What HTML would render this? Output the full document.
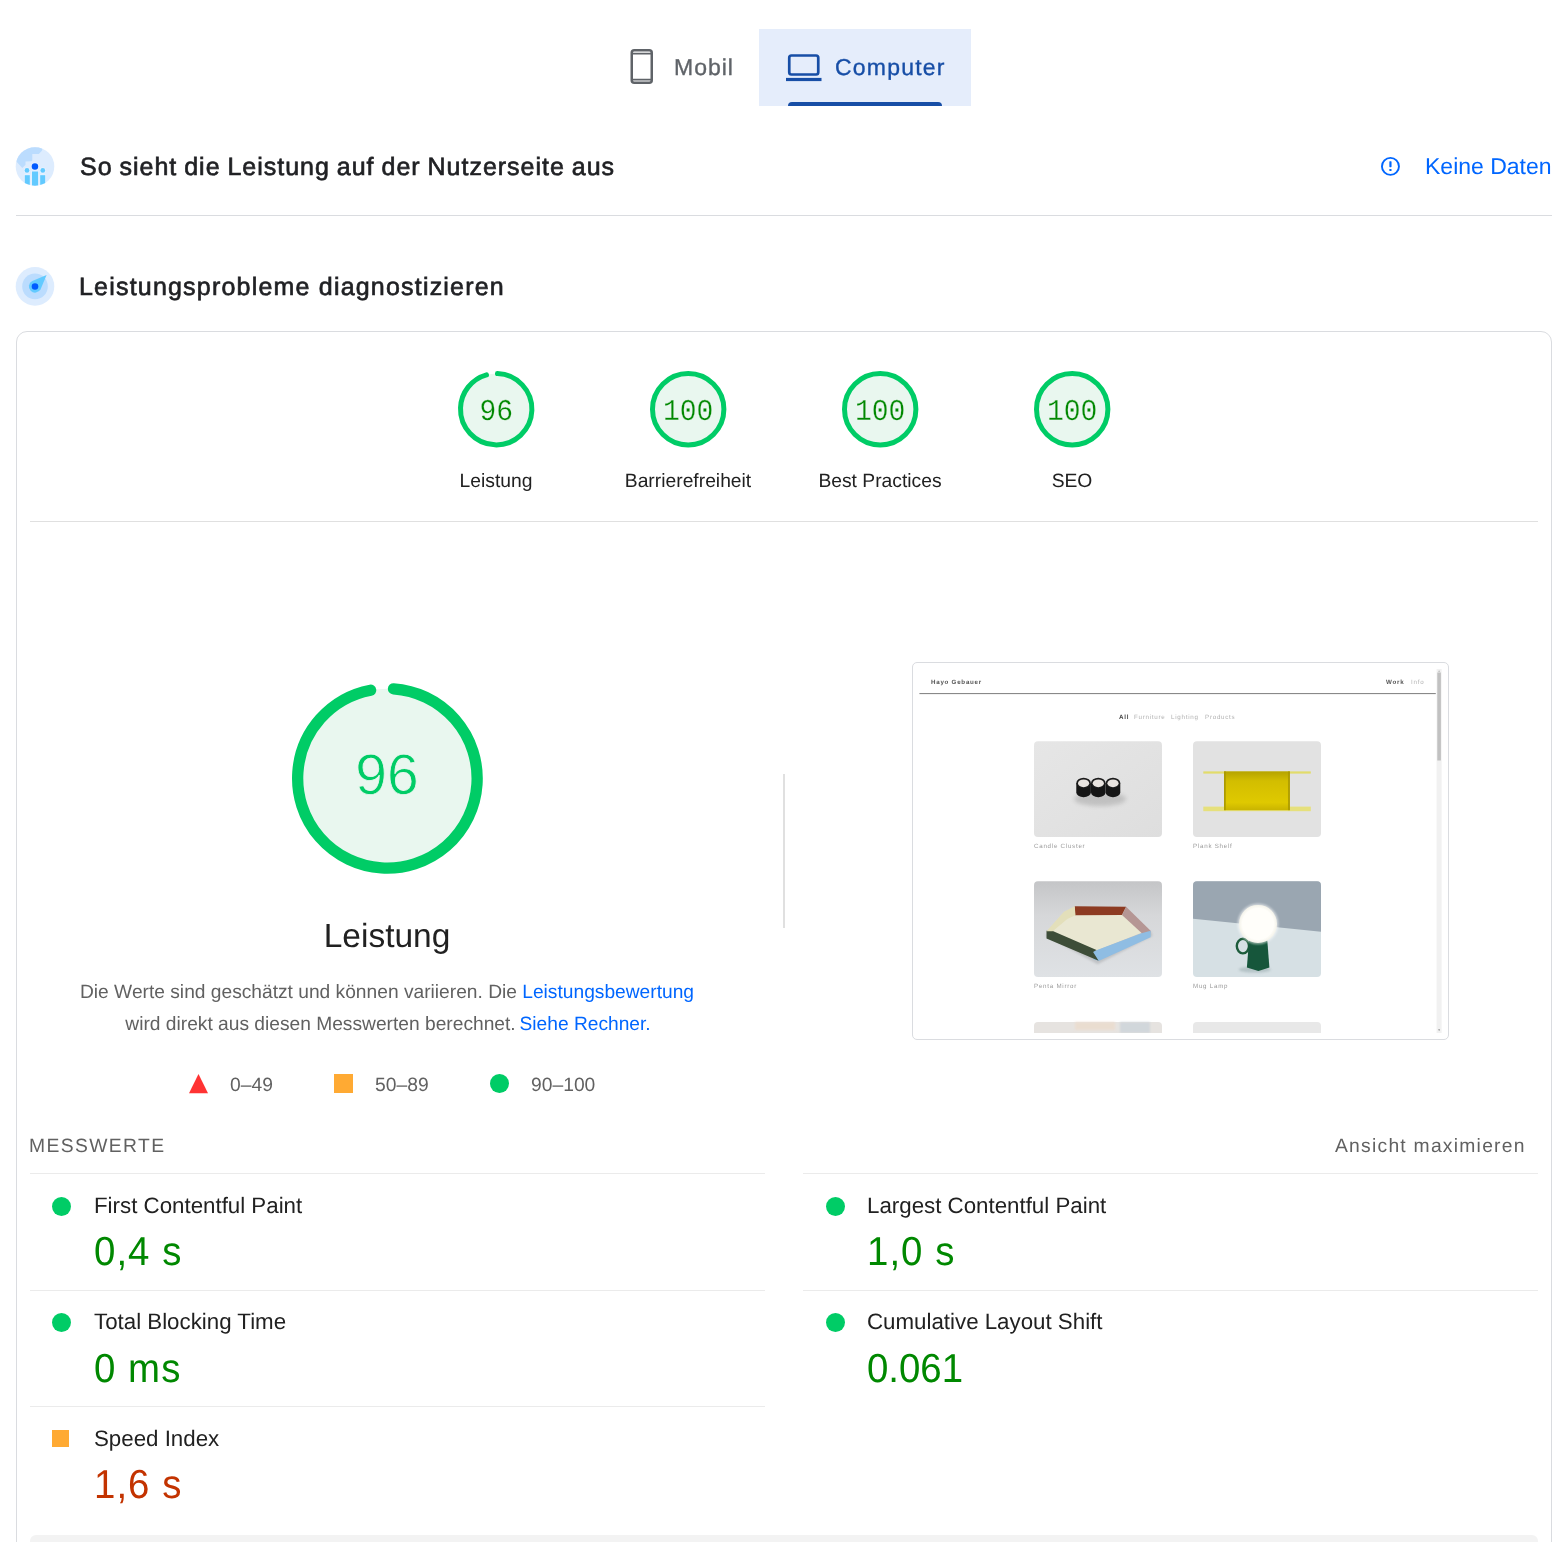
<!DOCTYPE html>
<html lang="de"><head><meta charset="utf-8"><title>PageSpeed Insights</title>
<style>
html,body{margin:0;padding:0;background:#fff;}
body{width:1568px;height:1542px;position:relative;overflow:hidden;font-family:"Liberation Sans",sans-serif;}
.t{position:absolute;white-space:nowrap;line-height:1;margin:0;padding:0;font-weight:400;will-change:transform;text-rendering:geometricPrecision;}
.f-s{font-family:"Liberation Sans",sans-serif;}
.f-m{font-family:"Liberation Mono",monospace;}
.b{position:absolute;box-sizing:border-box;}
svg{position:absolute;overflow:visible;}
a{color:#06f;text-decoration:none;}
</style></head><body>
<div class="b" style="left:759px;top:29px;width:212px;height:77px;background:#e5edfb;"></div>
<div class="b" style="left:788px;top:102px;width:154px;height:4px;background:#174ea6;border-radius:4px 4px 0 0;"></div>
<svg style="left:628px;top:46px" width="28" height="42" viewBox="628 46 28 42"><rect x="631.75" y="50.25" width="20" height="32.5" rx="2.5" fill="none" stroke="#5f6368" stroke-width="2.5"/><path d="M632 53.6H652M632 79.6H652" stroke="#5f6368" stroke-width="1.9" fill="none"/></svg>
<div class="t f-s" style="top:55.53px;font-size:23px;color:#5f6368;letter-spacing:1.0px;left:673.6px;-webkit-text-stroke:0.35px #5f6368;">Mobil</div>
<svg style="left:784px;top:50px" width="40" height="34" viewBox="784 50 40 34"><rect x="789.25" y="55.5" width="29" height="19" rx="2.2" fill="none" stroke="#174ea6" stroke-width="2.7"/><rect x="786" y="77.9" width="35.5" height="3.2" fill="#174ea6"/></svg>
<div class="t f-s" style="top:55.53px;font-size:23px;color:#174ea6;letter-spacing:1.2px;left:835.3px;-webkit-text-stroke:0.35px #174ea6;">Computer</div>
<h2 class="t f-s" style="top:154.84px;font-size:25px;color:#202124;letter-spacing:0.99px;left:79.8px;-webkit-text-stroke:0.65px #202124;word-spacing:-1px;">So sieht die Leistung auf der Nutzerseite aus</h2>
<div class="t f-s" style="top:155.33px;font-size:23.0px;color:#06f;right:16.799999999999955px;">Keine Daten</div>
<div class="b" style="left:16px;top:215px;width:1536px;height:1px;background:#dadce0;"></div>
<h2 class="t f-s" style="top:275.33px;font-size:25px;color:#202124;letter-spacing:1.2px;left:79.0px;-webkit-text-stroke:0.65px #202124;">Leistungsprobleme diagnostizieren</h2>
<div class="b" style="left:16px;top:331px;width:1536px;height:1300px;border:1px solid #dadce0;border-radius:11px;"></div>
<div class="b" style="left:30px;top:521px;width:1508px;height:1px;background:#e0e0e0;"></div>
<svg style="left:457.90px;top:371.05px;will-change:transform" width="76.4" height="76.4" viewBox="-38.2 -38.2 76.4 76.4"><circle r="35.70" fill="#e9f7ef" stroke="none"/><circle r="35.70" fill="none" stroke="#0c6" stroke-width="5" stroke-linecap="round" stroke-dasharray="212.84 224.31" transform="rotate(-87.994)"/><text transform="translate(0,10.75) scale(1,1.08)" text-anchor="middle" font-family="Liberation Mono, monospace" font-size="28" fill="#080" stroke="#e9f7ef" stroke-width="0.25" text-rendering="geometricPrecision">96</text></svg>
<div class="t f-s" style="top:471.66px;font-size:19.3px;color:#212121;left:496.1px;transform:translateX(-50%);">Leistung</div>
<svg style="left:649.90px;top:371.05px;will-change:transform" width="76.4" height="76.4" viewBox="-38.2 -38.2 76.4 76.4"><circle r="35.70" fill="#e9f7ef" stroke="none"/><circle r="35.70" fill="none" stroke="#0c6" stroke-width="5"/><text transform="translate(0,10.75) scale(1,1.08)" text-anchor="middle" font-family="Liberation Mono, monospace" font-size="28" fill="#080" stroke="#e9f7ef" stroke-width="0.25" text-rendering="geometricPrecision">100</text></svg>
<div class="t f-s" style="top:471.66px;font-size:19.3px;color:#212121;left:688.1px;transform:translateX(-50%);">Barrierefreiheit</div>
<svg style="left:841.90px;top:371.05px;will-change:transform" width="76.4" height="76.4" viewBox="-38.2 -38.2 76.4 76.4"><circle r="35.70" fill="#e9f7ef" stroke="none"/><circle r="35.70" fill="none" stroke="#0c6" stroke-width="5"/><text transform="translate(0,10.75) scale(1,1.08)" text-anchor="middle" font-family="Liberation Mono, monospace" font-size="28" fill="#080" stroke="#e9f7ef" stroke-width="0.25" text-rendering="geometricPrecision">100</text></svg>
<div class="t f-s" style="top:471.66px;font-size:19.3px;color:#212121;left:880.1px;transform:translateX(-50%);">Best Practices</div>
<svg style="left:1033.90px;top:371.05px;will-change:transform" width="76.4" height="76.4" viewBox="-38.2 -38.2 76.4 76.4"><circle r="35.70" fill="#e9f7ef" stroke="none"/><circle r="35.70" fill="none" stroke="#0c6" stroke-width="5"/><text transform="translate(0,10.75) scale(1,1.08)" text-anchor="middle" font-family="Liberation Mono, monospace" font-size="28" fill="#080" stroke="#e9f7ef" stroke-width="0.25" text-rendering="geometricPrecision">100</text></svg>
<div class="t f-s" style="top:471.66px;font-size:19.3px;color:#212121;left:1072.1px;transform:translateX(-50%);">SEO</div>
<svg style="left:291.65px;top:683.30px" width="190.8" height="190.8" viewBox="-95.4 -95.4 190.8 190.8"><circle r="89.75" fill="#e9f7ef"/><circle r="89.75" fill="none" stroke="#0c6" stroke-width="11.3" stroke-linecap="round" stroke-dasharray="539.96 563.92" transform="rotate(-86.1)"/></svg>
<div class="t f-s" style="top:746.74px;font-size:57px;color:#0c6;left:386.8px;transform:translateX(-50%);-webkit-text-stroke:0.8px #e9f7ef;">96</div>
<div class="t f-s" style="top:920.39px;font-size:33.5px;color:#212121;left:387.4px;transform:translateX(-50%);">Leistung</div>
<div class="t f-s" style="top:982.75px;font-size:19.2px;color:#616161;left:387.2px;transform:translateX(-50%);">Die Werte sind geschätzt und können variieren. Die <a>Leistungsbewertung</a></div>
<div class="t f-s" style="top:1014.50px;font-size:19.2px;color:#616161;left:388.0px;transform:translateX(-50%);">wird direkt aus diesen Messwerten berechnet. <a style="margin-left:-1.5px">Siehe Rechner.</a></div>
<svg style="left:189px;top:1073.75px" width="19" height="19.25" viewBox="0 0 19 19.25"><path d="M9.5 0L19 19.25H0Z" fill="#f33"/></svg>
<div class="t f-s" style="top:1075.91px;font-size:19.3px;color:#616161;left:229.7px;">0–49</div>
<div class="b" style="left:334px;top:1073.75px;width:19px;height:19.25px;background:#fa3;"></div>
<div class="t f-s" style="top:1075.91px;font-size:19.3px;color:#616161;left:375px;">50–89</div>
<div class="b" style="left:490px;top:1073.75px;width:19px;height:19.25px;background:#0c6;border-radius:50%;"></div>
<div class="t f-s" style="top:1075.91px;font-size:19.3px;color:#616161;left:530.7px;">90–100</div>
<div class="b" style="left:783px;top:774px;width:2px;height:154px;background:#e0e0e0;"></div>
<div class="t f-s" style="top:1136.66px;font-size:19.3px;color:#616161;letter-spacing:1.4px;left:29.3px;">MESSWERTE</div>
<div class="t f-s" style="top:1136.66px;font-size:19.3px;color:#616161;letter-spacing:1.25px;right:42.09999999999991px;">Ansicht maximieren</div>
<div class="b" style="left:30px;top:1173px;width:735px;height:1px;background:#ebebeb;"></div>
<div class="b" style="left:803px;top:1173px;width:735px;height:1px;background:#ebebeb;"></div>
<div class="b" style="left:52.0px;top:1197px;width:19px;height:19px;background:#0c6;border-radius:50%;"></div>
<div class="t f-s" style="top:1194.72px;font-size:22.3px;color:#212121;left:93.5px;">First Contentful Paint</div>
<div class="t f-s" style="top:1234.49px;font-size:38.4px;color:#080;letter-spacing:1.05px;left:93.6px;transform:scaleY(1.055);transform-origin:0 84.66%;">0,4 s</div>
<div class="b" style="left:825.5px;top:1197px;width:19px;height:19px;background:#0c6;border-radius:50%;"></div>
<div class="t f-s" style="top:1194.72px;font-size:22.3px;color:#212121;left:867.0px;">Largest Contentful Paint</div>
<div class="t f-s" style="top:1234.49px;font-size:38.4px;color:#080;letter-spacing:1.05px;left:867.1px;transform:scaleY(1.055);transform-origin:0 84.66%;">1,0 s</div>
<div class="b" style="left:30.0px;top:1290px;width:735px;height:1px;background:#ebebeb;"></div>
<div class="b" style="left:52.0px;top:1313px;width:19px;height:19px;background:#0c6;border-radius:50%;"></div>
<div class="t f-s" style="top:1311.22px;font-size:22.3px;color:#212121;left:93.5px;">Total Blocking Time</div>
<div class="t f-s" style="top:1350.99px;font-size:38.4px;color:#080;letter-spacing:1.05px;left:93.6px;transform:scaleY(1.055);transform-origin:0 84.66%;">0 ms</div>
<div class="b" style="left:803px;top:1290px;width:735px;height:1px;background:#ebebeb;"></div>
<div class="b" style="left:825.5px;top:1313px;width:19px;height:19px;background:#0c6;border-radius:50%;"></div>
<div class="t f-s" style="top:1311.22px;font-size:22.3px;color:#212121;left:867.0px;">Cumulative Layout Shift</div>
<div class="t f-s" style="top:1350.99px;font-size:38.4px;color:#080;left:867.1px;transform:scaleY(1.055);transform-origin:0 84.66%;">0.061</div>
<div class="b" style="left:30.0px;top:1406px;width:735px;height:1px;background:#ebebeb;"></div>
<div class="b" style="left:52.0px;top:1430.0px;width:17px;height:17px;background:#fa3;"></div>
<div class="t f-s" style="top:1427.72px;font-size:22.3px;color:#212121;left:93.5px;">Speed Index</div>
<div class="t f-s" style="top:1467.49px;font-size:38.4px;color:#c33300;letter-spacing:1.05px;left:93.6px;transform:scaleY(1.055);transform-origin:0 84.66%;">1,6 s</div>
<div class="b" style="left:30px;top:1535px;width:1508px;height:20px;background:#f3f3f3;border-radius:6px;"></div>
<svg style="left:15px;top:146px" width="40" height="41" viewBox="15 146 40 41">
<defs><clipPath id="c1"><circle cx="35" cy="166.5" r="19.3"/></clipPath></defs>
<circle cx="35" cy="166.5" r="19.3" fill="#ddecfe"/>
<g clip-path="url(#c1)">
<path d="M14 145H42.3Q42.6 149.2 41.9 150.7L39.3 153.6Q39 154.1 38 154.1H32.3V160.3Q32.3 161.2 31 161.3L25.5 161.5V164.7L22.3 167.9L14 159Z" fill="#bbdcfe"/>
<g stroke="#e6f1ff" stroke-width="1.8" paint-order="stroke">
<rect x="32" y="171.5" width="6.1" height="17" fill="#62caff"/>
<rect x="24.8" y="175.2" width="5" height="13" fill="#62caff"/>
<rect x="40.2" y="175.2" width="5" height="13" fill="#62caff"/>
<circle cx="27" cy="170.4" r="2.35" fill="#62caff"/>
<circle cx="42.8" cy="170.4" r="2.35" fill="#62caff"/>
<circle cx="34.95" cy="166.5" r="3.25" fill="#005aff"/>
</g></g>
</svg>
<svg style="left:15px;top:266px" width="40" height="41" viewBox="15 266 40 41">
<circle cx="35" cy="286.4" r="19.3" fill="#ddecfe"/>
<circle cx="35" cy="286.4" r="12.8" fill="#bbdcfe"/>
<path d="M46.6 275 L40.6 289.3 A6.2 6.2 0 1 1 32.3 280.9 Z" fill="#62caff"/>
<circle cx="35" cy="286.5" r="3.3" fill="#005aff"/>
</svg>
<svg style="left:1380px;top:156px" width="21" height="21" viewBox="1380 156 21 21">
<circle cx="1390.45" cy="166.4" r="8.5" fill="none" stroke="#06f" stroke-width="1.9"/>
<rect x="1389.35" y="161.2" width="2.2" height="6" rx="0.6" fill="#06f"/>
<rect x="1389.35" y="168.9" width="2.2" height="2.1" rx="0.6" fill="#06f"/>
</svg>
<div class="b" style="left:912px;top:662px;width:537px;height:378px;border:1px solid #dadce0;border-radius:5px;background:#fff;"></div>
<svg style="left:912px;top:662px" width="537" height="378" viewBox="912 662 537 378">
<defs>
<filter id="bl" x="-20%" y="-20%" width="140%" height="140%"><feGaussianBlur stdDeviation="0.45"/></filter>
<filter id="bl2" x="-30%" y="-30%" width="160%" height="160%"><feGaussianBlur stdDeviation="2.2"/></filter>
<filter id="bl3" x="-30%" y="-30%" width="160%" height="160%"><feGaussianBlur stdDeviation="1.1"/></filter>
<linearGradient id="g1" x1="0" y1="0" x2="1" y2="1"><stop offset="0" stop-color="#e6e6e6"/><stop offset="1" stop-color="#dedede"/></linearGradient>
<linearGradient id="g3" x1="0" y1="0" x2="0" y2="1"><stop offset="0" stop-color="#c4c5c7"/><stop offset="0.35" stop-color="#d6d7d9"/><stop offset="1" stop-color="#dfe2e5"/></linearGradient>
<linearGradient id="gy" x1="0" y1="0" x2="0" y2="1"><stop offset="0" stop-color="#b5a300"/><stop offset="0.25" stop-color="#d3be00"/><stop offset="0.8" stop-color="#dfc900"/><stop offset="1" stop-color="#c9b400"/></linearGradient>
<radialGradient id="gl" cx="0.5" cy="0.5" r="0.5"><stop offset="0.82" stop-color="#fffefa"/><stop offset="1" stop-color="#f4f3ea"/></radialGradient>
<clipPath id="k1"><rect x="1034" y="741.3" width="128" height="95.8" rx="4"/></clipPath>
<clipPath id="k2"><rect x="1193" y="741.3" width="128" height="95.8" rx="4"/></clipPath>
<clipPath id="k3"><rect x="1034" y="881.3" width="128" height="95.8" rx="4"/></clipPath>
<clipPath id="k4"><rect x="1193" y="881.3" width="128" height="95.8" rx="4"/></clipPath>
<clipPath id="k5"><rect x="919" y="669" width="523" height="364"/></clipPath>
</defs>
<g clip-path="url(#k5)">
<rect x="919.4" y="693.1" width="516.4" height="1" fill="#7d7d7d"/>
<rect x="1436.6" y="669" width="5" height="364" fill="#f1f1f1"/>
<rect x="1437.3" y="672.5" width="3.6" height="88" fill="#c1c1c1"/>
<path d="M1438.2 671.6L1439.1 670.4L1440 671.6Z" fill="#8a8a8a"/><path d="M1438.2 1029.6L1439.1 1030.8L1440 1029.6Z" fill="#505050"/>
<g clip-path="url(#k1)"><rect x="1034" y="741" width="128" height="97" fill="url(#g1)"/>
<ellipse cx="1100" cy="799" rx="26" ry="7" fill="#9a9a9a" opacity="0.45" filter="url(#bl2)"/>
<g filter="url(#bl)">
<path d="M1076.3 783V792.6A7.3 4.6 0 0 0 1090.8999999999999 792.6V783Z" fill="#161616"/>
<ellipse cx="1083.6" cy="783" rx="7.3" ry="5.2" fill="#1c1c1c"/>
<ellipse cx="1083.6" cy="783.3" rx="5.6" ry="3.9" fill="#e9e4e0"/>
<path d="M1091.0 783V792.6A7.3 4.6 0 0 0 1105.6 792.6V783Z" fill="#161616"/>
<ellipse cx="1098.3" cy="783" rx="7.3" ry="5.2" fill="#1c1c1c"/>
<ellipse cx="1098.3" cy="783.3" rx="5.6" ry="3.9" fill="#e9e4e0"/>
<path d="M1105.7 783V792.6A7.3 4.6 0 0 0 1120.3 792.6V783Z" fill="#161616"/>
<ellipse cx="1113.0" cy="783" rx="7.3" ry="5.2" fill="#1c1c1c"/>
<ellipse cx="1113.0" cy="783.3" rx="5.6" ry="3.9" fill="#e9e4e0"/>
</g></g>
<g clip-path="url(#k2)"><rect x="1193" y="741" width="128" height="97" fill="#e2e2e2"/>
<g filter="url(#bl)"><rect x="1203.3" y="771.4" width="107.5" height="2.2" fill="#e2dc6a"/><rect x="1203.3" y="806.6" width="107.5" height="4.6" fill="#e6e07c"/>
<rect x="1224.1" y="771.4" width="65.7" height="38.8" fill="url(#gy)"/><rect x="1224.1" y="771.4" width="1.6" height="38.8" fill="#a89700"/><rect x="1288.2" y="771.4" width="1.6" height="38.8" fill="#a89700"/></g></g>
<g clip-path="url(#k3)"><rect x="1034" y="881" width="128" height="97" fill="url(#g3)"/>
<polygon points="1044.5,934.9 1097.6,964.3 1152.7,935.7 1150.6,931.2" fill="#a9abae" opacity="0.55" filter="url(#bl3)"/>
<g filter="url(#bl)">
<polygon points="1074.7,914.5 1122.4,914.1 1142.4,932.4 1095.9,950.8 1050.6,931.2 1065.9,918.6" fill="#e9e7d2"/>
<polygon points="1074.7,906.3 1126.1,906.7 1122.0,914.9 1075.1,915.3" fill="#8d3b21"/>
<polygon points="1126.1,906.7 1150.6,930.8 1149.8,935.7 1142.4,933.7 1122.0,914.9" fill="#b59694"/>
<polygon points="1142.4,932.9 1150.6,930.8 1150.6,937.3 1099.2,960.8 1093.5,959.4 1093.1,951.6" fill="#8fbde3"/>
<polygon points="1046.5,930.8 1051.6,930.4 1096.5,950.0 1093.1,952.0 1098.6,960.8 1046.5,938.4" fill="#3d4d37"/>
<polygon points="1046.5,931.2 1063.9,911.8 1074.7,906.3 1075.5,915.3 1067.3,919.0 1052.7,931.2" fill="#e3dfba"/>
</g></g>
<g clip-path="url(#k4)"><rect x="1193" y="881" width="128" height="97" fill="#d6e0e4"/>
<polygon points="1191.4,878.2 1322.0,878.2 1322.0,931.8 1191.4,918.6" fill="#9aa6b1"/>
<ellipse cx="1254.7" cy="969.6" rx="16" ry="3" fill="#9fb0b4" opacity="0.6" filter="url(#bl3)"/>
<g filter="url(#bl)">
<ellipse cx="1242.9" cy="946.1" rx="6.1" ry="7.3" fill="none" stroke="#1d5b3a" stroke-width="2.4"/>
<polygon points="1249.0,940.4 1267.3,940.4 1269.4,967.6 1258.4,971.0 1246.9,967.6" fill="#14563a"/>
<circle cx="1258.0" cy="923.9" r="20.4" fill="#fff" opacity="0.55" filter="url(#bl3)"/>
<circle cx="1258.0" cy="923.9" r="19.0" fill="url(#gl)"/>
</g></g>
<rect x="1034" y="1022" width="128" height="20" rx="4" fill="#e6e3e0"/><rect x="1120" y="1022" width="30" height="11" fill="#c9d2da" opacity="0.7" filter="url(#bl3)"/><rect x="1075" y="1022" width="40" height="8" fill="#ecdccd" opacity="0.8" filter="url(#bl3)"/>
<rect x="1193" y="1022" width="128" height="20" rx="4" fill="#e8e8e8"/>
</g></svg>
<div class="t f-s" style="left:930.5px;top:679.70px;font-size:6.2px;color:#555;letter-spacing:0.75px;font-weight:700;">Hayo Gebauer</div>
<div class="t f-s" style="left:1386px;top:679.70px;font-size:6.2px;color:#555;letter-spacing:0.75px;font-weight:700;">Work</div>
<div class="t f-s" style="left:1411.2px;top:679.70px;font-size:6.2px;color:#b5b5b5;letter-spacing:0.75px;">Info</div>
<div class="t f-s" style="left:1118.8px;top:715.30px;font-size:6.2px;color:#444;letter-spacing:0.75px;font-weight:700;">All</div>
<div class="t f-s" style="left:1133.7px;top:715.30px;font-size:6.2px;color:#b2b2b2;letter-spacing:0.75px;">Furniture</div>
<div class="t f-s" style="left:1170.9px;top:715.30px;font-size:6.2px;color:#b2b2b2;letter-spacing:0.75px;">Lighting</div>
<div class="t f-s" style="left:1205.3px;top:715.30px;font-size:6.2px;color:#b2b2b2;letter-spacing:0.75px;">Products</div>
<div class="t f-s" style="left:1034px;top:843.90px;font-size:6.2px;color:#9a9a9a;letter-spacing:0.75px;">Candle Cluster</div>
<div class="t f-s" style="left:1193px;top:843.90px;font-size:6.2px;color:#9a9a9a;letter-spacing:0.75px;">Plank Shelf</div>
<div class="t f-s" style="left:1034px;top:984.40px;font-size:6.2px;color:#9a9a9a;letter-spacing:0.75px;">Penta Mirror</div>
<div class="t f-s" style="left:1193px;top:984.40px;font-size:6.2px;color:#9a9a9a;letter-spacing:0.75px;">Mug Lamp</div>
</body></html>
